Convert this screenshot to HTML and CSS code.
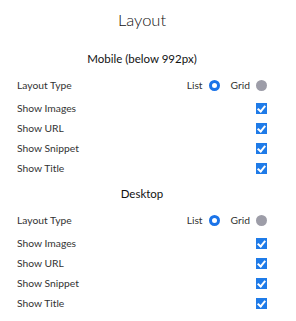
FILE: index.html
```html
<!DOCTYPE html>
<html lang="en">
<head>
  <meta charset="UTF-8">
  <title>Layout</title>
  <link rel="stylesheet" href="styles.css">
</head>
<body>
  <div class="panel">
    <h1 class="panel-title">Layout</h1>

    <div class="section">
      <h2 class="section-title">Mobile (below 992px)</h2>
      <div class="row row-type">
        <span class="label">Layout Type</span>
        <div class="choice">
          <span class="choice-text">List</span>
          <span class="radio active"></span>
          <span class="choice-text">Grid</span>
          <span class="radio"></span>
        </div>
      </div>
      <div class="row"><span class="label">Show Images</span><span class="check"></span></div>
      <div class="row"><span class="label">Show URL</span><span class="check"></span></div>
      <div class="row"><span class="label">Show Snippet</span><span class="check"></span></div>
      <div class="row"><span class="label">Show Title</span><span class="check"></span></div>
    </div>

    <div class="section">
      <h2 class="section-title">Desktop</h2>
      <div class="row row-type">
        <span class="label">Layout Type</span>
        <div class="choice">
          <span class="choice-text">List</span>
          <span class="radio active"></span>
          <span class="choice-text">Grid</span>
          <span class="radio"></span>
        </div>
      </div>
      <div class="row"><span class="label">Show Images</span><span class="check"></span></div>
      <div class="row"><span class="label">Show URL</span><span class="check"></span></div>
      <div class="row"><span class="label">Show Snippet</span><span class="check"></span></div>
      <div class="row"><span class="label">Show Title</span><span class="check"></span></div>
    </div>
  </div>
</body>
</html>
```

FILE: styles.css
```css
html, body {
  margin: 0;
  padding: 0;
  background: #ffffff;
  font-family: Lato, 'Noto Sans', sans-serif;
  color: #333333;
}

.panel {
  padding: 8px 29px 0 17px;
}

.panel-title {
  margin: 0;
  text-align: center;
  font-size: 16.5px;
  font-weight: 300;
  line-height: 24px;
  color: #111111;
}

.section-title {
  margin: 0;
  text-align: center;
  font-size: 11.5px;
  font-weight: 400;
  line-height: 18px;
  color: #111111;
}

.section {
  display: flex;
  flex-direction: column;
}

.section:first-of-type {
  margin-top: 18px;
}

.section + .section {
  margin-top: 7px;
}

.section-title + .row {
  margin-top: 8px;
}

.row {
  display: flex;
  justify-content: space-between;
  align-items: center;
  height: 20px;
}

.row-type {
  height: 22px;
  align-items: flex-start;
}

.row-type .label {
  margin-top: 3px;
}

.label {
  font-size: 10.3px;
  color: #333333;
}

.choice {
  display: flex;
  align-items: center;
  margin-top: 3px;
  font-size: 10.3px;
  color: #333333;
}

.choice-text {
  margin-right: 6px;
}

.radio {
  width: 11px;
  height: 11px;
  border-radius: 50%;
  background: #9d9da8;
  box-sizing: border-box;
}

.radio.active {
  background: #ffffff;
  border: 3px solid #1a73e8;
  margin-right: 11px;
}

.check {
  width: 11px;
  height: 11px;
  background: #1f7be8;
  position: relative;
}

.check::after {
  content: '';
  position: absolute;
  left: 3px;
  top: 1px;
  width: 3px;
  height: 6px;
  border: solid #ffffff;
  border-width: 0 2px 2px 0;
  transform: rotate(40deg);
}
```
